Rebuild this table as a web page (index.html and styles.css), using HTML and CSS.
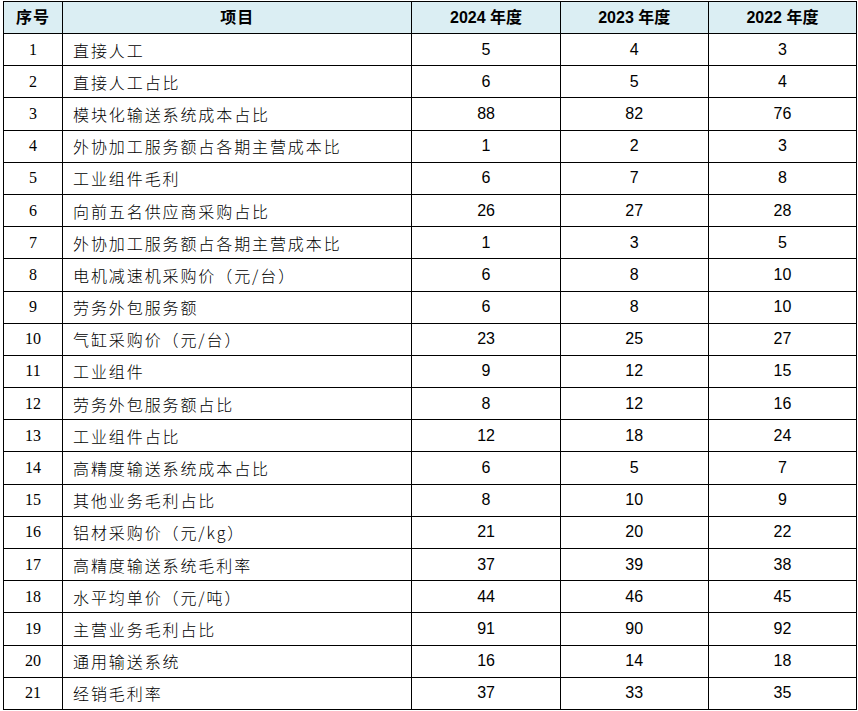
FILE: index.html
```html
<!DOCTYPE html>
<html lang="zh-CN">
<head>
<meta charset="utf-8">
<title>表格</title>
<link rel="stylesheet" href="styles.css">
</head>
<body>
<table class="data">
  <colgroup>
    <col class="c-no"><col class="c-item"><col class="c-y"><col class="c-y"><col class="c-y">
  </colgroup>
  <thead>
    <tr><th>序号</th><th>项目</th><th><span class="yr">2024</span> 年度</th><th><span class="yr">2023</span> 年度</th><th><span class="yr">2022</span> 年度</th></tr>
  </thead>
  <tbody>
    <tr><td class="no">1</td><td class="item">直接人工</td><td>5</td><td>4</td><td>3</td></tr>
    <tr><td class="no">2</td><td class="item">直接人工占比</td><td>6</td><td>5</td><td>4</td></tr>
    <tr><td class="no">3</td><td class="item">模块化输送系统成本占比</td><td>88</td><td>82</td><td>76</td></tr>
    <tr><td class="no">4</td><td class="item">外协加工服务额占各期主营成本比</td><td>1</td><td>2</td><td>3</td></tr>
    <tr><td class="no">5</td><td class="item">工业组件毛利</td><td>6</td><td>7</td><td>8</td></tr>
    <tr><td class="no">6</td><td class="item">向前五名供应商采购占比</td><td>26</td><td>27</td><td>28</td></tr>
    <tr><td class="no">7</td><td class="item">外协加工服务额占各期主营成本比</td><td>1</td><td>3</td><td>5</td></tr>
    <tr><td class="no">8</td><td class="item">电机减速机采购价（元/台）</td><td>6</td><td>8</td><td>10</td></tr>
    <tr><td class="no">9</td><td class="item">劳务外包服务额</td><td>6</td><td>8</td><td>10</td></tr>
    <tr><td class="no">10</td><td class="item">气缸采购价（元/台）</td><td>23</td><td>25</td><td>27</td></tr>
    <tr><td class="no">11</td><td class="item">工业组件</td><td>9</td><td>12</td><td>15</td></tr>
    <tr><td class="no">12</td><td class="item">劳务外包服务额占比</td><td>8</td><td>12</td><td>16</td></tr>
    <tr><td class="no">13</td><td class="item">工业组件占比</td><td>12</td><td>18</td><td>24</td></tr>
    <tr><td class="no">14</td><td class="item">高精度输送系统成本占比</td><td>6</td><td>5</td><td>7</td></tr>
    <tr><td class="no">15</td><td class="item">其他业务毛利占比</td><td>8</td><td>10</td><td>9</td></tr>
    <tr><td class="no">16</td><td class="item">铝材采购价（元/kg）</td><td>21</td><td>20</td><td>22</td></tr>
    <tr><td class="no">17</td><td class="item">高精度输送系统毛利率</td><td>37</td><td>39</td><td>38</td></tr>
    <tr><td class="no">18</td><td class="item">水平均单价（元/吨）</td><td>44</td><td>46</td><td>45</td></tr>
    <tr><td class="no">19</td><td class="item">主营业务毛利占比</td><td>91</td><td>90</td><td>92</td></tr>
    <tr><td class="no">20</td><td class="item">通用输送系统</td><td>16</td><td>14</td><td>18</td></tr>
    <tr><td class="no">21</td><td class="item">经销毛利率</td><td>37</td><td>33</td><td>35</td></tr>
  </tbody>
</table>
</body>
</html>
```

FILE: styles.css
```css
html, body {
  margin: 0;
  padding: 0;
  background: #ffffff;
}
body {
  padding: 1px 0 0 3px;
}
.data {
  border-collapse: collapse;
  table-layout: fixed;
  width: 854px;
  color: #000;
  font-family: "Liberation Sans", "Noto Sans CJK SC", sans-serif;
  font-size: 16px;
}
.c-no { width: 59px; }
.c-item { width: 349px; }
.c-y { width: 148px; }
.data th, .data td {
  border: 1px solid #000;
  padding: 0;
  height: 31.2px;
  text-align: center;
  vertical-align: middle;
  line-height: 1;
}
.data thead th {
  background: #dbeef3;
  font-family: "Liberation Sans", "Noto Sans CJK SC", sans-serif;
  font-weight: bold;
  font-size: 16px;
  height: 31px;
}
.data thead th:nth-child(-n+2) {
  letter-spacing: 1px;
}
.data td.no {
  font-family: "Liberation Serif", "Noto Sans CJK SC", serif;
}
.data td.item {
  text-align: left;
  padding-left: 10px;
  font-family: "Noto Sans CJK SC", sans-serif;
  font-weight: 300;
  letter-spacing: 1.9px;
  white-space: nowrap;
}
```
